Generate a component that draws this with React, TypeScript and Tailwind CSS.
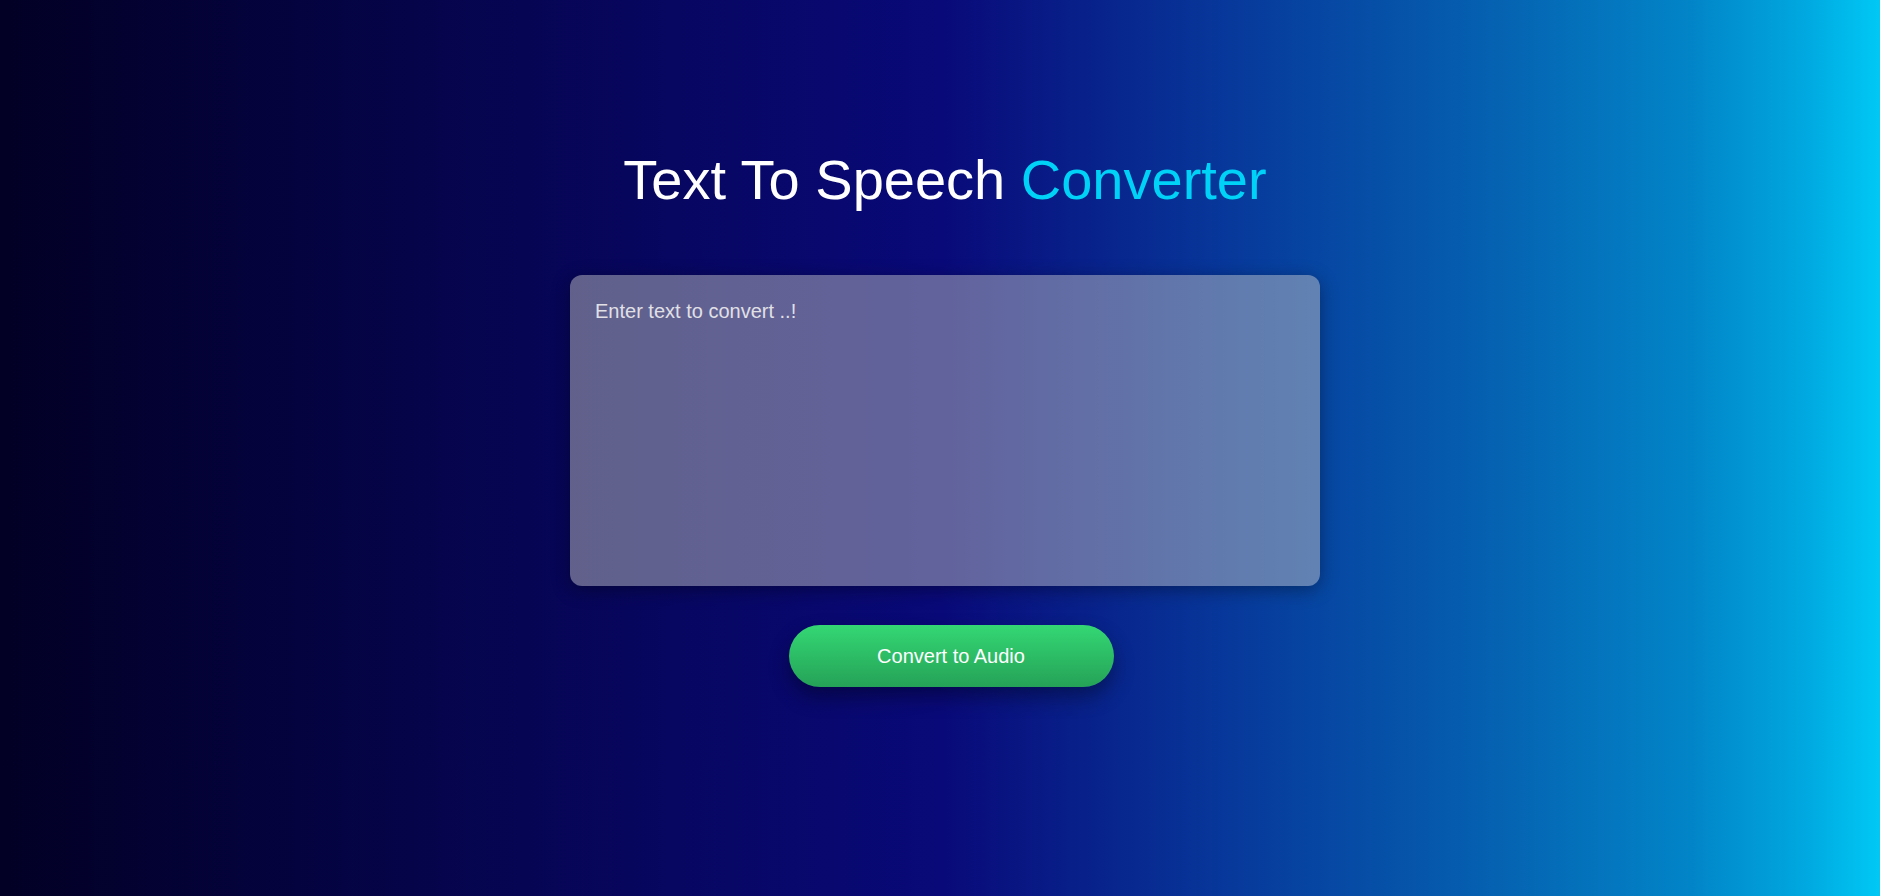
export default function App() {
  return (
    <main className="min-h-screen w-full flex flex-col items-center pl-[10px] bg-[linear-gradient(90deg,#020024_0%,#090979_50%,#07379a_65%,#0563b2_80%,#0285c8_90%,#00a8e0_96%,#00c8f5_100%)] font-['Liberation_Sans',Arial,sans-serif]">
      <h1 className="mt-[148px] text-[56px] leading-[64px] font-normal text-white">
        Text To Speech <span className="text-[#00d2f7]">Converter</span>
      </h1>

      <textarea
        placeholder="Enter text to convert ..!"
        className="mt-[63px] w-[750px] h-[311px] resize-none rounded-[12px] bg-[rgba(196,196,196,0.48)] p-[25px] text-[20px] leading-[23px] text-white placeholder:text-[#e0e0e6] outline-none shadow-[0_4px_18px_rgba(0,0,0,0.35)]"
      />

      <button className="mt-[39px] ml-[12px] w-[325px] h-[62px] rounded-full bg-[linear-gradient(180deg,#34d774_0%,#25a257_100%)] text-white text-[20px] shadow-[0_10px_20px_rgba(0,0,0,0.35)]">
        Convert to Audio
      </button>
    </main>
  )
}
